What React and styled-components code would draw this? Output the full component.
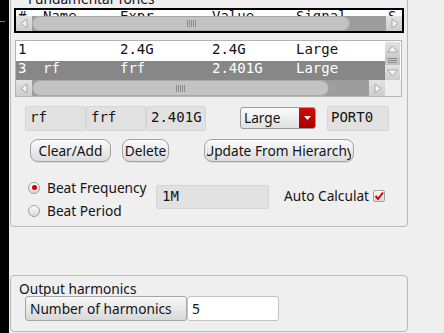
import React from "react";
import styled, { createGlobalStyle } from "styled-components";

const MONO = `"DejaVu Sans Mono", "Liberation Mono", monospace`;

const GlobalStyle = createGlobalStyle`
  html, body {
    margin: 0;
    padding: 0;
    background: #efefef;
    overflow: hidden;
  }
  body {
    font-family: "Noto Sans", "DejaVu Sans", sans-serif;
    font-size: 13.7px;
    color: #141414;
  }
`;

const Page = styled.div`
  display: flex;
  height: 333px;
  overflow: hidden;
`;

const Strip = styled.div`
  width: 9px;
  flex: none;
  background: #000;
  padding-top: 21px;
  box-sizing: border-box;
`;

const StripMark = styled.div`
  width: 5px;
  height: 1px;
  background: #2fae7c;
`;

const Main = styled.div`
  flex: 1;
  padding-left: 1px;
  display: flex;
  flex-direction: column;
`;

const Group = styled.div`
  width: 398px;
  box-sizing: border-box;
  border: 1px solid #b9b9b9;
  border-radius: 4px;
  padding: ${(p) => p.$pad};
  margin-top: ${(p) => p.$mt}px;
  display: flex;
  flex-direction: column;
  align-items: flex-start;
`;

const GroupTitle = styled.div`
  line-height: ${(p) => p.$lh}px;
  margin-left: ${(p) => p.$ml}px;
  white-space: nowrap;
`;

/* ---- tables ---- */
const TopList = styled.div`
  width: 390px;
  box-sizing: border-box;
  border: 2px solid #000;
  background: #fff;
  margin-top: 2px;
  overflow: hidden;
`;

const Cols = styled.div`
  display: grid;
  grid-template-columns: 25px 77px 92px 84px 92px 1fr;
  padding-left: 2px;
  font-family: ${MONO};
  font-size: 14px;
  white-space: nowrap;
`;

const HeaderRow = styled(Cols)`
  height: 6px;
  line-height: 12px;
  overflow: hidden;
`;

const List = styled.div`
  width: 387px;
  box-sizing: border-box;
  border: 1px solid #b4b4b4;
  background: #fff;
  padding-top: 1px;
  margin: 7px 0 0 1px;
`;

const ListBody = styled.div`
  display: flex;
`;

const Rows = styled.div`
  width: 369px;
`;

const Row = styled(Cols)`
  height: 19px;
  line-height: 15px;
  background: ${(p) => (p.$sel ? "#878787" : "#fff")};
  color: ${(p) => (p.$sel ? "#fff" : "#111")};
`;

/* ---- scrollbars ---- */
const HBar = styled.div`
  display: flex;
  height: ${(p) => p.$h}px;
  width: ${(p) => p.$w}px;
  background: #9d9d9d;
`;

const ArrowBtn = styled.div`
  width: ${(p) => p.$w || 16}px;
  height: ${(p) => p.$h || "auto"};
  flex: none;
  display: flex;
  align-items: center;
  justify-content: center;
  background: linear-gradient(#e2e2e2, #cdcdcd);
`;

const Trough = styled.div`
  flex: 1;
  display: flex;
`;

const Handle = styled.div`
  width: ${(p) => p.$w}px;
  box-sizing: border-box;
  background: #c3c3c3;
  border: 1px solid #a9a9a9;
  border-radius: 8px;
  display: flex;
  align-items: center;
  justify-content: center;
`;

const Grip = styled.div`
  width: 9px;
  height: 7px;
  background: repeating-linear-gradient(90deg, #8c8c8c 0 1px, transparent 1px 2px);
`;

const Corner = styled.div`
  flex: 1;
  background: #efefef;
`;

const VBar = styled.div`
  width: 15px;
  display: flex;
  flex-direction: column;
  background: #cfcfcf;
`;

const VGrip = styled.div`
  height: 8px;
  display: flex;
  justify-content: center;
  align-items: center;
  background: #c3c3c3;
  &::after {
    content: "";
    width: 9px;
    height: 6px;
    background: repeating-linear-gradient(180deg, #8c8c8c 0 1px, transparent 1px 2px);
  }
`;

const Arrow = ({ dir }) => {
  const pts = {
    left: "10,3 4,7.5 10,12",
    right: "5,3 11,7.5 5,12",
    up: "2.5,10 7.5,4 12.5,10",
    down: "2.5,5 7.5,11 12.5,5",
  }[dir];
  return (
    <svg width="15" height="15" viewBox="0 0 15 15">
      <polygon points={pts} fill="#f4f4f4" stroke="#a6a6a6" strokeWidth="1" />
    </svg>
  );
};

const HScroll = ({ h, w, handle }) => (
  <HBar $h={h} $w={w}>
    <ArrowBtn>
      <Arrow dir="left" />
    </ArrowBtn>
    <Trough>
      <Handle $w={handle}>
        <Grip />
      </Handle>
    </Trough>
    <ArrowBtn>
      <Arrow dir="right" />
    </ArrowBtn>
  </HBar>
);

/* ---- form parts ---- */
const FieldRow = styled.div`
  display: flex;
  align-items: flex-start;
  margin: 9px 0 0 11px;
`;

const Field = styled.div`
  width: ${(p) => p.$w}px;
  height: ${(p) => p.$h || 25}px;
  box-sizing: border-box;
  background: #e1e1e1;
  border: 1px solid #d5d5d5;
  border-radius: 2px;
  font-family: ${MONO};
  font-size: 14px;
  line-height: ${(p) => (p.$h || 25) - 4}px;
  padding-left: ${(p) => p.$pl || 4}px;
  margin-left: ${(p) => p.$ml || 0}px;
  margin-top: ${(p) => p.$mt || 0}px;
  white-space: nowrap;
`;

const Combo = styled.div`
  display: flex;
  width: 76px;
  height: 22px;
  box-sizing: border-box;
  border: 1px solid #9a9a9a;
  border-radius: 3px;
  background: linear-gradient(#fcfcfc, #e0e0e0);
  margin: 1px 0 0 34px;
  overflow: hidden;
`;

const ComboText = styled.div`
  flex: 1;
  padding-left: 3px;
  line-height: 20px;
`;

const ComboBtn = styled.div`
  width: 16px;
  background: linear-gradient(#d30a0a, #a60000);
  display: flex;
  align-items: center;
  justify-content: center;
`;

const ButtonRow = styled.div`
  display: flex;
  margin: 8px 0 0 16px;
`;

const Button = styled.button`
  width: ${(p) => p.$w}px;
  height: 23px;
  box-sizing: border-box;
  margin: 0 0 0 ${(p) => p.$ml || 0}px;
  padding: 0;
  border: 1px solid #a3a3a3;
  border-radius: 8px;
  background: linear-gradient(#fbfbfb, #dcdcdc);
  box-shadow: 0 1px 0 rgba(0, 0, 0, 0.08);
  font: inherit;
  color: inherit;
  line-height: 21px;
  display: flex;
  justify-content: center;
  overflow: hidden;
  white-space: nowrap;
`;

const ButtonLabel = styled.span`
  width: ${(p) => p.$w}px;
  display: flex;
  justify-content: center;
  overflow: hidden;
`;

const BeatSection = styled.div`
  display: flex;
  align-items: flex-start;
  margin: 14px 0 0 14px;
`;

const RadioCol = styled.div`
  width: 128px;
  display: flex;
  flex-direction: column;
`;

const RadioRow = styled.label`
  display: flex;
  align-items: center;
  gap: 7px;
  height: 23px;
  line-height: 23px;
  white-space: nowrap;
`;

const Radio = styled.span`
  width: 12px;
  height: 12px;
  box-sizing: border-box;
  border-radius: 50%;
  border: 1px solid #a0a0a0;
  background: linear-gradient(#fdfdfd, #d9d9d9);
  display: flex;
  align-items: center;
  justify-content: center;
  &::after {
    content: "";
    width: 5px;
    height: 5px;
    border-radius: 50%;
    background: ${(p) => (p.$on ? "#d00000" : "transparent")};
  }
`;

const AutoCalc = styled.label`
  display: flex;
  align-items: center;
  gap: 4px;
  height: 23px;
  line-height: 23px;
  margin: 8px 0 0 15px;
  white-space: nowrap;
`;

const Check = styled.span`
  width: 12px;
  height: 12px;
  box-sizing: border-box;
  border: 1px solid #a3a3a3;
  border-radius: 2px;
  background: linear-gradient(#fafafa, #dcdcdc);
  display: flex;
  align-items: center;
  justify-content: center;
`;

const HarmRow = styled.div`
  display: flex;
  margin-left: 11px;
`;

const HarmLabel = styled.div`
  width: 162px;
  height: 25px;
  box-sizing: border-box;
  border: 1px solid #a6a6a6;
  border-radius: 3px;
  background: linear-gradient(#f8f8f8, #d8d8d8);
  padding-left: 4px;
  line-height: 23px;
  white-space: nowrap;
`;

const HarmInput = styled.div`
  width: 92px;
  height: 25px;
  box-sizing: border-box;
  border: 1px solid #c4c4c4;
  border-radius: 3px;
  background: #fff;
  padding-left: 4px;
  line-height: 23px;
`;

const headers = ["#", "Name", "Expr", "Value", "Signal", "S"];
const tones = [
  { id: "1", name: "", expr: "2.4G", value: "2.4G", signal: "Large" },
  { id: "3", name: "rf", expr: "frf", value: "2.401G", signal: "Large", sel: true },
];

export default function App() {
  return (
    <>
      <GlobalStyle />
      <Page>
        <Strip>
          <StripMark />
        </Strip>
        <Main>
          <Group $pad="5px 3px 4px" $mt={-15}>
            <GroupTitle $lh={15} $ml={14}>Fundamental Tones</GroupTitle>
            <TopList>
              <HeaderRow>
                {headers.map((h) => (
                  <span key={h}>{h}</span>
                ))}
              </HeaderRow>
              <HScroll h={15} w={386} handle={318} />
            </TopList>

            <List>
              <ListBody>
                <Rows>
                  {tones.map((t) => (
                    <Row key={t.id} $sel={t.sel}>
                      <span>{t.id}</span>
                      <span>{t.name}</span>
                      <span>{t.expr}</span>
                      <span>{t.value}</span>
                      <span>{t.signal}</span>
                    </Row>
                  ))}
                </Rows>
                <VBar>
                  <ArrowBtn $w={15} $h="15px">
                    <Arrow dir="up" />
                  </ArrowBtn>
                  <VGrip />
                  <ArrowBtn $w={15} $h="15px">
                    <Arrow dir="down" />
                  </ArrowBtn>
                </VBar>
              </ListBody>
              <ListBody>
                <HScroll h={16} w={369} handle={297} />
                <Corner />
              </ListBody>
            </List>

            <FieldRow>
              <Field $w={61}>rf</Field>
              <Field $w={60}>frf</Field>
              <Field $w={60}>2.401G</Field>
              <Combo>
                <ComboText>Large</ComboText>
                <ComboBtn>
                  <svg width="7" height="4" viewBox="0 0 7 4">
                    <polygon points="0,0 7,0 3.5,4" fill="#fff" />
                  </svg>
                </ComboBtn>
              </Combo>
              <Field $w={62} $ml={11} $pl={3}>PORT0</Field>
            </FieldRow>

            <ButtonRow>
              <Button $w={81}>Clear/Add</Button>
              <Button $w={47} $ml={11}>Delete</Button>
              <Button $w={150} $ml={35}>
                <ButtonLabel $w={144}>Update From Hierarchy</ButtonLabel>
              </Button>
            </ButtonRow>

            <BeatSection>
              <RadioCol>
                <RadioRow>
                  <Radio $on />
                  Beat Frequency
                </RadioRow>
                <RadioRow>
                  <Radio />
                  Beat Period
                </RadioRow>
              </RadioCol>
              <Field $w={113} $h={24} $mt={9} $pl={5}>1M</Field>
              <AutoCalc>
                Auto Calculat
                <Check>
                  <svg width="10" height="10" viewBox="0 0 10 10">
                    <path d="M1.5 5 L4 8 L9 1.5" fill="none" stroke="#d80000" strokeWidth="2" />
                  </svg>
                </Check>
              </AutoCalc>
            </BeatSection>
          </Group>

          <Group $pad="6px 3px 10px" $mt={48}>
            <GroupTitle $lh={14} $ml={5}>Output harmonics</GroupTitle>
            <HarmRow>
              <HarmLabel>Number of harmonics</HarmLabel>
              <HarmInput>5</HarmInput>
            </HarmRow>
          </Group>
        </Main>
      </Page>
    </>
  );
}
